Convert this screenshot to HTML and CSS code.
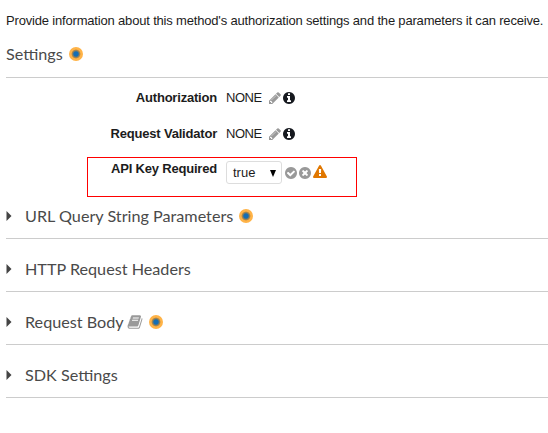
FILE: index.html
```html
<!DOCTYPE html>
<html lang="en">
<head>
<meta charset="utf-8">
<title>Method Request</title>
<link rel="stylesheet" href="styles.css">
</head>
<body>
<svg class="defs" aria-hidden="true">
  <symbol id="pencil" viewBox="0 0 1792 1792"><path d="M491 1536l91-91-235-235-91 91v107h128v128h107zm523-928q0-22-22-22-10 0-17 7l-542 542q-7 7-7 17 0 22 22 22 10 0 17-7l542-542q7-7 7-17zm-54-192l416 416-832 832h-416v-416zm683 96q0 53-37 90l-166 166-416-416 166-165q36-38 90-38 53 0 91 38l235 234q37 39 37 91z"/></symbol>
  <symbol id="info" viewBox="0 0 1792 1792"><path d="M1152 1376v-160q0-14-9-23t-23-9h-96v-512q0-14-9-23t-23-9h-320q-14 0-23 9t-9 23v160q0 14 9 23t23 9h96v320h-96q-14 0-23 9t-9 23v160q0 14 9 23t23 9h448q14 0 23-9t9-23zm-128-896v-160q0-14-9-23t-23-9h-192q-14 0-23 9t-9 23v160q0 14 9 23t23 9h192q14 0 23-9t9-23zm640 416q0 209-103 385.5t-279.5 279.5-385.5 103-385.5-103-279.5-279.5-103-385.5 103-385.5 279.5-279.5 385.5-103 385.5 103 279.5 279.5 103 385.5z"/></symbol>
  <symbol id="check" viewBox="0 0 1792 1792"><path d="M1412 734q0-28-18-46l-91-90q-19-19-45-19t-45 19l-408 407-226-226q-19-19-45-19t-45 19l-91 90q-18 18-18 46 0 27 18 45l362 362q19 19 45 19 27 0 46-19l543-543q18-18 18-45zm252 162q0 209-103 385.5t-279.5 279.5-385.5 103-385.5-103-279.5-279.5-103-385.5 103-385.5 279.5-279.5 385.5-103 385.5 103 279.5 279.5 103 385.5z"/></symbol>
  <symbol id="times" viewBox="0 0 1792 1792"><path d="M1277 1122q0-26-19-45l-181-181 181-181q19-19 19-45 0-27-19-46l-90-90q-19-19-46-19-26 0-45 19l-181 181-181-181q-19-19-45-19-27 0-46 19l-90 90q-19 19-19 46 0 26 19 45l181 181-181 181q-19 19-19 45 0 27 19 46l90 90q19 19 46 19 26 0 45-19l181-181 181 181q19 19 45 19 27 0 46-19l90-90q19-19 19-46zm387-226q0 209-103 385.5t-279.5 279.5-385.5 103-385.5-103-279.5-279.5-103-385.5 103-385.5 279.5-279.5 385.5-103 385.5 103 279.5 279.5 103 385.5z"/></symbol>
  <symbol id="warning" viewBox="0 0 1792 1792"><path d="M1024 1375v-190q0-14-9.500-23.500t-22.500-9.500h-192q-13 0-22.500 9.500t-9.500 23.500v190q0 14 9.500 23.500t22.500 9.500h192q13 0 22.500-9.500t9.500-23.500zm-2-374l18-459q0-12-10-19-13-11-24-11h-220q-11 0-24 11-10 7-10 21l17 457q0 10 10 16.500t24 6.500h185q14 0 23.500-6.500t10.500-16.500zm-14-934l768 1408q35 63-2 126-17 29-46.500 46t-63.500 17h-1536q-34 0-63.500-17t-46.500-46q-37-63-2-126l768-1408q17-31 47-49t65-18 65 18 47 49z"/></symbol>
  <symbol id="book" viewBox="0 0 1792 1792"><path d="M1703 478q40 57 18 129l-275 906q-19 64-76.500 107.500t-122.500 43.500h-923q-77 0-148.500-53.500t-99.500-131.500q-24-67-2-127 0-4 3-27t4-37q1-8-3-21.500t-3-19.500q2-11 8-21t16.500-23.500 16.500-23.500q23-38 45-91.500t30-91.500q3-10 .5-30t-.5-28q3-11 17-28t17-23q21-36 42-92t25-90q1-9-2.500-32t.5-28q4-13 22-30.500t22-22.500q19-26 42.500-84.500t27.500-96.500q1-8-3-25.500t-2-26.500q2-8 9-18t18-23 17-21q8-12 16.500-30.500t15-35 16-36 19.500-32 26.500-23.500 36-11.500 47.500 5.500l-1 3q38-9 51-9h761q74 0 114 56t18 130l-274 906q-36 119-71.500 153.500t-128.500 34.500h-869q-27 0-38 15-11 16-1 43 24 70 144 70h923q29 0 56-15.500t35-41.500l300-987q7-22 5-57 38 15 59 43zm-1064 2q-4 13 2 22.500t20 9.500h608q13 0 25.500-9.500t16.500-22.500l21-64q4-13-2-22.500t-20-9.500h-608q-13 0-25.500 9.500t-16.500 22.500zm-83 256q-4 13 2 22.500t20 9.500h608q13 0 25.500-9.500t16.500-22.500l21-64q4-13-2-22.500t-20-9.500h-608q-13 0-25.500 9.500t-16.500 22.500z"/></symbol>
</svg>
<main class="page">
  <p class="intro">Provide information about this method's authorization settings and the parameters it can receive.</p>
  <h2 class="title">Settings<span class="beacon"></span></h2>
  <div class="form">
    <div class="row">
      <span class="label">Authorization</span>
      <span class="value">NONE</span>
      <svg class="icon muted pencil"><use href="#pencil"/></svg>
      <svg class="icon"><use href="#info"/></svg>
    </div>
    <div class="row">
      <span class="label">Request Validator</span>
      <span class="value">NONE</span>
      <svg class="icon muted pencil"><use href="#pencil"/></svg>
      <svg class="icon"><use href="#info"/></svg>
    </div>
    <div class="row key-row">
      <span class="label">API Key Required</span>
      <span class="select"><span>true</span><svg class="caret" viewBox="0 0 6 7"><path d="M0 0h6L3 7z"/></svg></span>
      <svg class="icon muted"><use href="#check"/></svg>
      <svg class="icon muted"><use href="#times"/></svg>
      <svg class="icon warn"><use href="#warning"/></svg>
    </div>
  </div>
  <section class="section first"><svg class="arrow" viewBox="0 0 5 10"><path d="M0 0l5 5-5 5z"/></svg><h2>URL Query String Parameters</h2><span class="beacon"></span></section>
  <section class="section"><svg class="arrow" viewBox="0 0 5 10"><path d="M0 0l5 5-5 5z"/></svg><h2>HTTP Request Headers</h2></section>
  <section class="section"><svg class="arrow" viewBox="0 0 5 10"><path d="M0 0l5 5-5 5z"/></svg><h2>Request Body</h2><svg class="book"><use href="#book"/></svg><span class="beacon"></span></section>
  <section class="section"><svg class="arrow" viewBox="0 0 5 10"><path d="M0 0l5 5-5 5z"/></svg><h2>SDK Settings</h2></section>
</main>
</body>
</html>
```
FILE: styles.css
```css
* { box-sizing: border-box; }
body {
  margin: 0;
  background: #fff;
  color: #1c1c1c;
  font: 13px/18px "Liberation Sans", Arial, sans-serif;
  overflow: hidden;
}
.defs { position: absolute; width: 0; height: 0; }
.page { padding: 12px 0 0 6px; }
.intro { margin: 0; white-space: nowrap; letter-spacing: -0.178px; }
h2 {
  margin: 0;
  font: 400 16.2px/22px Lato, sans-serif;
  color: #4a4a4a;
  white-space: nowrap;
}
.title {
  display: flex;
  align-items: center;
  height: 48px;
  padding-top: 1px;
  border-bottom: 1px solid #ccc;
}
.beacon {
  flex: none;
  width: 14px;
  height: 14px;
  margin-left: 6px;
  border-radius: 50%;
  background: radial-gradient(circle, #146eb4 0 2.2px, #6f7a70 3px, #b98a42 4px, #ffb347 4.8px);
}
.form { height: 119px; padding-top: 11px; }
.row { display: flex; align-items: center; height: 18px; margin-bottom: 18px; }
.label { width: 211px; margin-right: 9px; text-align: right; font-weight: 700; letter-spacing: -0.2px; }
.value { width: 42px; letter-spacing: -0.5px; }
.icon { width: 14px; height: 14px; fill: #16191f; }
.muted { fill: #999; }
.warn { fill: #e07700; }
.key-row {
  align-items: flex-start;
  width: 270px;
  height: 40px;
  margin: -4px 0 0 81px;
  padding-top: 2px;
  border: 1px solid #f00;
}
.key-row .label { width: 129px; }
.key-row .icon { margin-top: 6px; }
.key-row .icon.warn { width: 14px; height: 14px; margin: 5px 0 0 1px; }
.select {
  display: flex;
  align-items: center;
  justify-content: space-between;
  width: 56px;
  height: 23px;
  margin: 1px 2px 0 0;
  padding: 1px 5px 0 6px;
  border: 1px solid #ddd;
  border-radius: 3px;
}
.caret { width: 6px; height: 7px; }
.section {
  display: flex;
  align-items: center;
  height: 53px;
  padding-top: 8px;
  border-bottom: 1px solid #ccc;
}
.section.first { height: 42px; padding-top: 0; padding-bottom: 4px; }
.arrow { width: 6px; height: 10px; margin-right: 13px; fill: #444; }
.book { width: 16px; height: 16px; margin-left: 3px; fill: #999; }
```
